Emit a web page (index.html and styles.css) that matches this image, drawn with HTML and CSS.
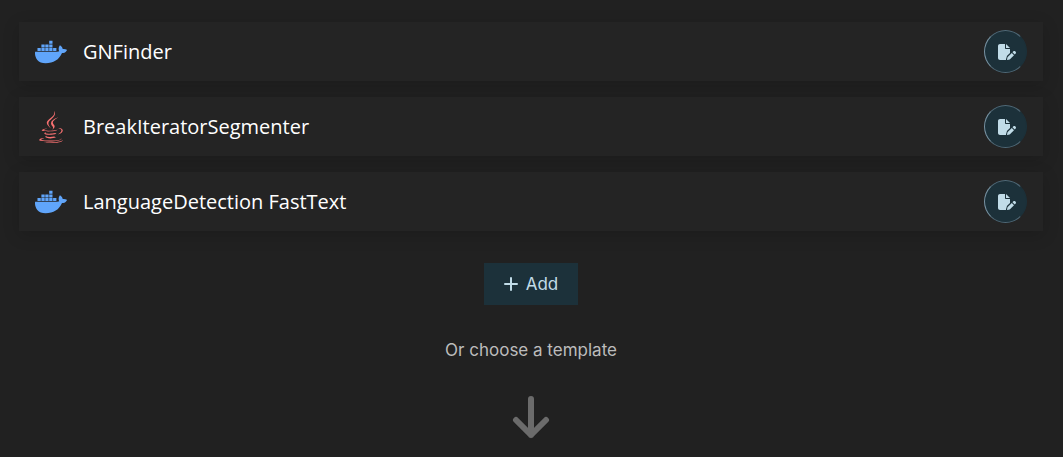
FILE: index.html
```
<!DOCTYPE html>
<html lang="en">
<head>
<meta charset="utf-8">
<meta name="viewport" content="width=device-width, initial-scale=1">
<title>Pipeline components</title>
<link rel="stylesheet" href="styles.css">
</head>
<body>
<svg class="sprite" aria-hidden="true">
  <symbol id="docker" viewBox="0 0 640 512"><path d="M349.9 236.3h-66.1v-59.4h66.1v59.4zm0-204.3h-66.1v60.7h66.1V32zm78.2 144.8H362v59.4h66.1v-59.4zm-156.3-72.1h-66.1v60.1h66.1v-60.1zm78.1 0h-66.1v60.1h66.1v-60.1zm276.8 100c-14.4-9.7-47.6-13.2-73.1-8.4-3.3-24-16.7-44.9-41.1-63.7l-14-9.3-9.3 14c-18.4 27.8-23.4 73.6-3.7 103.8-8.7 4.7-25.8 11.1-48.4 10.7H2.4c-8.7 50.8 5.8 116.8 44 162.1 37.1 43.9 92.7 66.2 165.4 66.2 157.4 0 273.9-72.5 328.4-204.2 21.4.4 67.6.1 91.3-45.2 1.5-2.5 6.6-13.2 8.5-17.1l-13.3-8.9zm-511.1-27.9h-66v59.4h66.1v-59.4zm78.1 0h-66.1v59.4h66.1v-59.4zm78.1 0h-66.1v59.4h66.1v-59.4zm-78.1-72.1h-66.1v60.1h66.1v-60.1z"/></symbol>
  <symbol id="java" viewBox="0 0 384 512"><path d="M277.74 312.9c9.8-6.7 23.4-12.5 23.4-12.5s-38.7 7-77.2 10.2c-47.1 3.9-97.7 4.7-123.1 1.3-60.1-8 33-30.1 33-30.1s-36.1-2.4-80.6 19c-52.5 25.4 130 37 224.5 12.1zm-85.4-32.1c-19-42.7-83.1-80.2 0-145.8C296 53.2 242.84 0 242.84 0c21.5 84.5-75.6 110.1-110.7 162.6-23.9 35.9 11.7 74.4 60.2 118.2zm114.6-176.2c.1 0-175.2 43.8-91.5 140.2 24.7 28.4-6.5 54-6.5 54s62.7-32.4 33.9-72.9c-26.9-37.8-47.5-56.6 64.1-121.3zm-6.1 270.5a12.19 12.19 0 0 1-2 2.6c128.3-33.7 81.1-118.9 19.8-97.3a17.33 17.33 0 0 0-8.2 6.3 70.45 70.45 0 0 1 11-3c31-6.5 75.5 41.5-20.6 91.4zM348 437.4s14.5 11.9-15.9 21.2c-57.9 17.5-240.8 22.8-291.6.7-18.3-7.9 16-19 26.8-21.3 11.2-2.4 17.7-2 17.7-2-20.3-14.3-131.3 28.1-56.4 40.2C232.84 509.4 401 461.3 348 437.4zM124.44 396c-78.7 22 47.9 67.4 148.1 24.5a185.89 185.89 0 0 1-28.2-13.8c-44.7 8.5-65.4 9.1-106 4.5-33.5-3.8-13.9-15.2-13.9-15.2zm179.8 97.2c-78.7 14.8-175.8 13.1-233.3 3.6 0-.1 11.8 9.7 72.4 13.6 92.2 5.9 233.8-3.3 237.1-46.9 0 0-6.4 16.5-76.2 29.7zM260.64 353c-59.2 11.4-93.5 11.1-136.8 6.6-33.5-3.5-11.6-19.7-11.6-19.7-86.8 28.8 48.2 61.4 169.5 25.9a60.37 60.37 0 0 1-21.1-12.8z"/></symbol>
  <symbol id="edit" viewBox="0 0 576 512"><path d="M0 64C0 29 29 0 64 0h160v128c0 18 14 32 32 32h128v126L299 371c-9 9-16 21-19 34l-24 82c-3 9-2 17 1 25H64c-35 0-64-29-64-64V64z"/><path d="M384 128H256V0z"/><path d="M550 235c-16-15-41-15-57 0l-29 30 71 71 29-30c16-15 16-41 0-56zM311 417c-4 4-7 9-8 15l-15 60c-1 6 0 11 4 15s10 6 15 5l60-15c6-2 11-5 15-9l130-129-71-71z"/></symbol>
</svg>
<main class="page">
  <ul class="components">
    <li class="component">
      <svg class="component-icon docker" aria-hidden="true"><use href="#docker"/></svg>
      <span class="component-name">GNFinder</span>
      <button class="edit-button" type="button" aria-label="Edit GNFinder"><svg class="edit-icon"><use href="#edit"/></svg></button>
    </li>
    <li class="component">
      <svg class="component-icon java" aria-hidden="true"><use href="#java"/></svg>
      <span class="component-name">BreakIteratorSegmenter</span>
      <button class="edit-button" type="button" aria-label="Edit BreakIteratorSegmenter"><svg class="edit-icon"><use href="#edit"/></svg></button>
    </li>
    <li class="component">
      <svg class="component-icon docker" aria-hidden="true"><use href="#docker"/></svg>
      <span class="component-name">LanguageDetection FastText</span>
      <button class="edit-button" type="button" aria-label="Edit LanguageDetection FastText"><svg class="edit-icon"><use href="#edit"/></svg></button>
    </li>
  </ul>
  <button class="add-button" type="button">
    <svg class="add-icon" viewBox="0 0 14 14" aria-hidden="true"><path d="M7 1v12M1 7h12"/></svg>
    Add
  </button>
  <p class="hint">Or choose a template</p>
  <svg class="arrow" viewBox="0 0 38 44" aria-hidden="true"><path d="M19 4v36M4 25l15 15 15-15"/></svg>
</main>
</body>
</html>
```
FILE: styles.css
```
* {
  box-sizing: border-box;
}

body {
  margin: 0;
  background: #212121;
  color: #fff;
  font-family: "Open Sans", sans-serif;
}

.sprite {
  display: none;
}

.page {
  display: flex;
  flex-direction: column;
  align-items: center;
  padding: 22px 20px 0 19px;
}

.components {
  display: flex;
  flex-direction: column;
  gap: 16px;
  align-self: stretch;
  margin: 0;
  padding: 0;
  list-style: none;
}

.component {
  display: flex;
  align-items: center;
  gap: 16px;
  padding: 8px 16px;
  background: #242424;
  box-shadow: 0 4px 16px rgba(0, 0, 0, 0.16);
}

.component-icon {
  width: 32px;
  height: 32px;
}

.docker {
  fill: #60a5fa;
}

.java {
  fill: #f87171;
}

.component-name {
  flex: 1;
  font-size: 20px;
  line-height: 28px;
}

.edit-button {
  display: grid;
  place-items: center;
  width: 43px;
  height: 43px;
  padding: 0 0 0 2px;
  border: 1px solid #4f6876;
  border-left-color: #7893a3;
  border-right-color: #1c313a;
  border-radius: 50%;
  background: #1c313a;
  color: #c1dce8;
}

.edit-icon {
  width: 18px;
  height: 16px;
  fill: currentColor;
}

.add-button {
  display: flex;
  align-items: center;
  gap: 8px;
  margin-top: 32px;
  padding: 9px 20px;
  border: 0;
  background: #1c313a;
  color: #c1dce8;
  font-family: Inter, sans-serif;
  font-size: 17px;
  line-height: 24px;
}

.add-icon {
  width: 14px;
  height: 14px;
  fill: none;
  stroke: currentColor;
  stroke-width: 2;
  stroke-linecap: round;
}

.hint {
  margin: 33px 0;
  color: #bcbcbc;
  font-family: Inter, sans-serif;
  font-size: 17px;
  line-height: 24px;
}

.arrow {
  width: 38px;
  height: 44px;
  fill: none;
  stroke: #6b6b6b;
  stroke-width: 6;
  stroke-linecap: round;
  stroke-linejoin: round;
}
```
